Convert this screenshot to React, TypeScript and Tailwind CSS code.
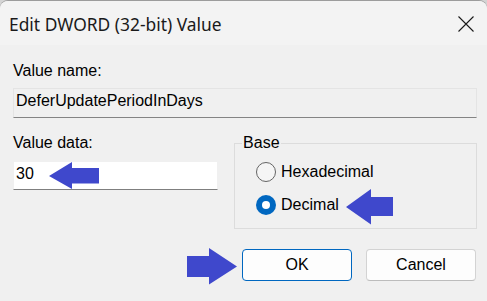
import React from "react";

const body = { fontFamily: '"Liberation Sans", Arial, sans-serif' };
const title = { fontFamily: '"Noto Sans", "Open Sans", sans-serif' };

function Radio({ checked, label }: { checked?: boolean; label: string }) {
  return (
    <div className="flex items-center h-[20px]">
      {checked ? (
        <div className="w-[20px] h-[20px] rounded-full bg-[#0067c0] flex items-center justify-center">
          <div className="w-[8px] h-[8px] rounded-full bg-white" />
        </div>
      ) : (
        <div className="w-[20px] h-[20px] rounded-full border border-[#646464] bg-[#f5f5f5]" />
      )}
      <span className="ml-[5px] text-[16px] leading-[18px] text-black">{label}</span>
    </div>
  );
}

export default function App() {
  return (
    <div className="w-[487px] h-[301px] bg-[#d4d4d4] overflow-hidden relative" style={body}>
      <div className="w-[487px] h-[301px] bg-[#f0f0f0] rounded-t-[8px] border-t border-[#9c9c9c] flex flex-col">
        {/* title bar */}
        <div className="h-[44px] bg-[#f3f3f3] rounded-t-[8px] flex items-center justify-between pl-[9px] pr-[13px]">
          <span className="text-[17.4px] leading-[24px] text-[#1a1a1a] mt-[1px]" style={title}>
            Edit DWORD (32-bit) Value
          </span>
          <svg width="16" height="16" viewBox="0 0 16 16" className="mt-[1px]">
            <path d="M0.5 0.5 L15.5 15.5 M15.5 0.5 L0.5 15.5" stroke="#1a1a1a" strokeWidth="1.1" fill="none" />
          </svg>
        </div>

        {/* body */}
        <div className="flex flex-col pl-[13px] pr-[10px] pt-[17px] text-black">
          <div className="text-[16px] leading-[18px]">Value name:</div>
          <div className="mt-[8px] h-[30px] bg-[#f0f0f0] border border-[#e4e4e4] border-b-[#848484] pl-[2px] pt-[3px] text-[16px] leading-[18px]">
            DeferUpdatePeriodInDays
          </div>

          <div className="mt-[16px] flex gap-[16px]">
            <div className="w-[206px] flex flex-col">
              <div className="text-[16px] leading-[18px]">Value data:</div>
              <div className="mt-[9px] h-[29px] bg-white border border-[#f0f0f0] border-b-[#7f7f7f] pl-[2px] pt-[3px] text-[16px] leading-[18px]">
                30
              </div>
            </div>
            <fieldset className="w-[244px] h-[95px] border border-[#dcdcdc] pl-[7px]">
              <legend className="px-[1px] text-[16px] leading-[18px]">Base</legend>
              <div className="ml-[14px] mt-[10px] flex flex-col gap-[13px]">
                <Radio label="Hexadecimal" />
                <Radio checked label="Decimal" />
              </div>
            </fieldset>
          </div>

          <div className="mt-[20px] flex justify-end gap-[14px] pr-[1px]">
            <button className="w-[110px] h-[32px] rounded-[4px] bg-[#fdfdfd] border border-[#0067c0] text-[16px] leading-[18px] text-black flex items-center justify-center">
              OK
            </button>
            <button className="w-[110px] h-[32px] rounded-[4px] bg-[#fdfdfd] border border-[#d3d3d3] border-b-[#bcbcbc] text-[16px] leading-[18px] text-black flex items-center justify-center">
              Cancel
            </button>
          </div>
        </div>
      </div>

      {/* annotation arrows */}
      <svg className="absolute left-0 top-0 pointer-events-none" width="487" height="301" viewBox="0 0 487 301">
        <polygon points="49,176 72,162 72,168 99,168 99,183.5 72,183.5 72,189" fill="#3f48cc" />
        <polygon points="346,207 371,189 371,197 393,197 393,216 371,216 371,224.5" fill="#3f48cc" />
        <polygon points="187,256 209,256 209,248 237,266.5 209,284.5 209,277 187,277" fill="#3f48cc" />
      </svg>
    </div>
  );
}
